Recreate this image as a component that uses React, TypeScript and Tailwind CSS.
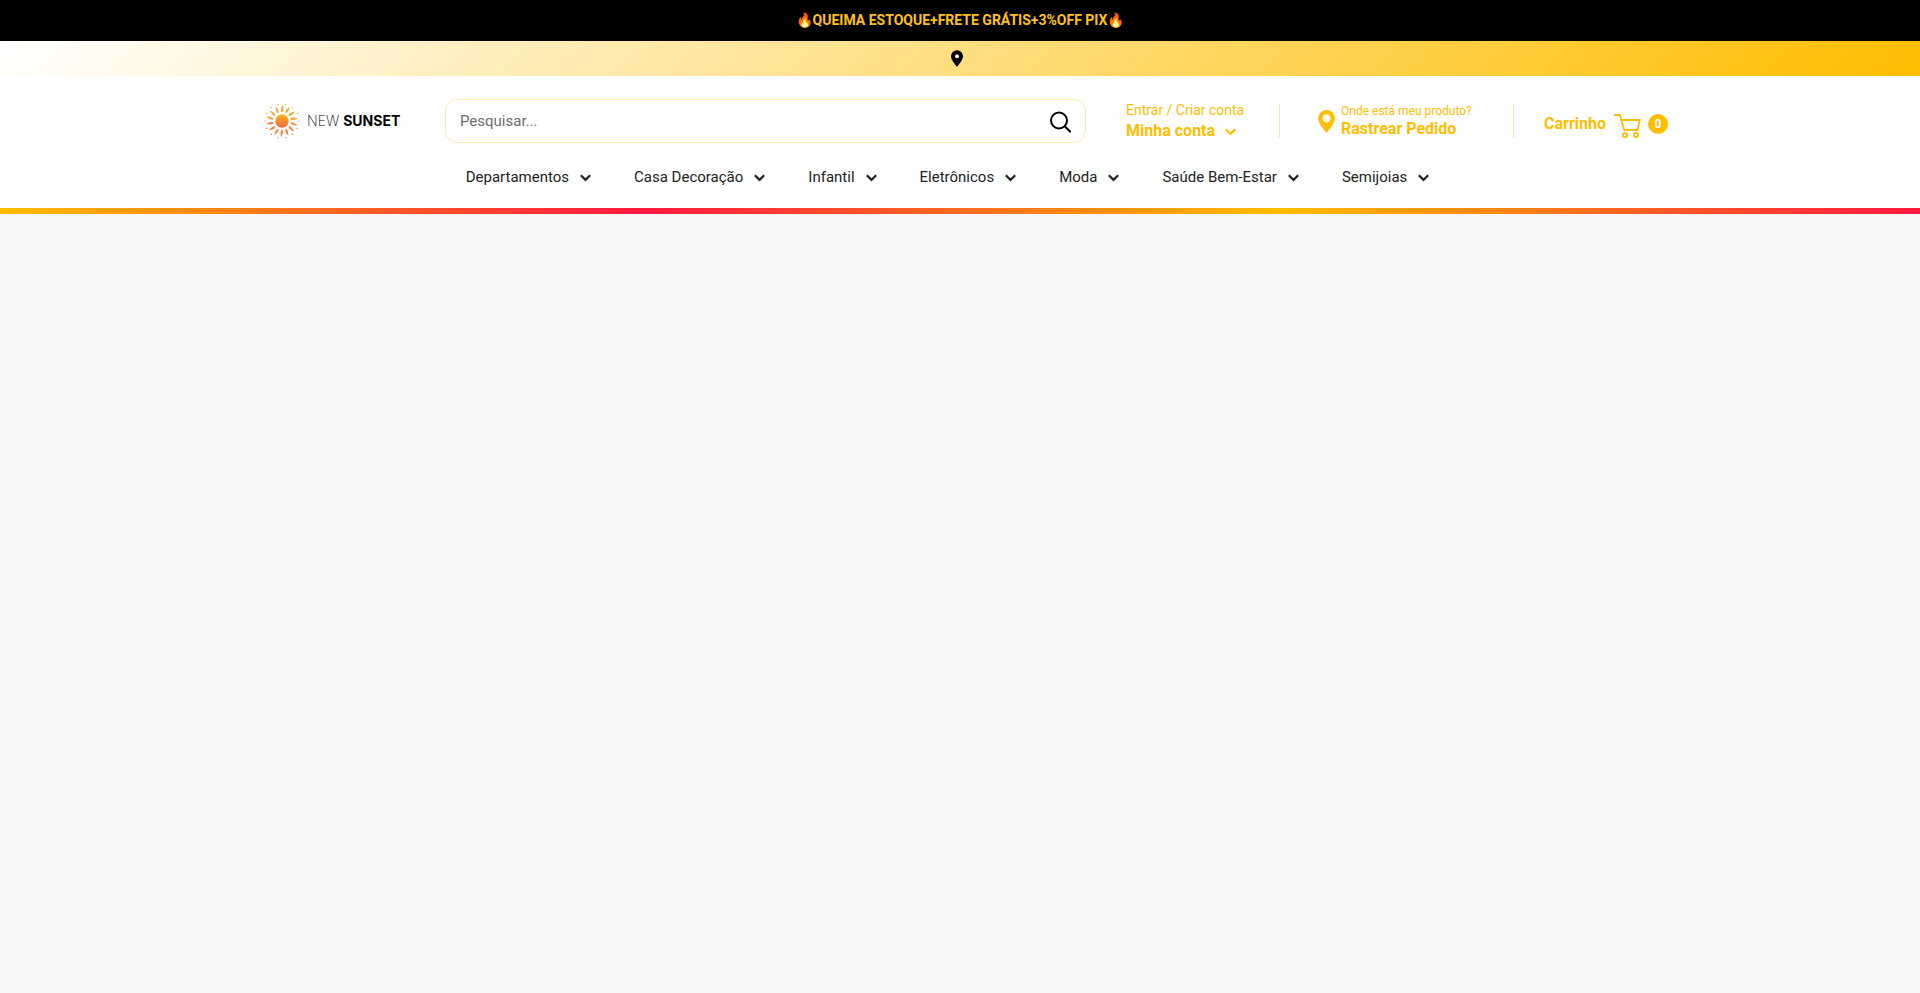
import React from "react";

const menu = ["Departamentos", "Casa Decoração", "Infantil", "Eletrônicos", "Moda", "Saúde Bem-Estar", "Semijoias"];

function Chevron() {
  return (
    <svg viewBox="0 0 11 8" className="mt-0.5 h-2 w-[11px]" fill="none" stroke="currentColor" strokeWidth="2.2" aria-hidden="true">
      <path d="M.8 1.200 5.500 5.900 10.200 1.200" />
    </svg>
  );
}

function Pin({ className, hole }: { className: string; hole: number }) {
  return (
    <svg viewBox="0 0 16 22" className={className} aria-hidden="true">
      <path fill="currentColor" d="M8 0a8 8 0 0 0-8 8c0 5.600 8 14 8 14s8-8.400 8-14a8 8 0 0 0-8-8Z" />
      <circle cx="8" cy="8" r={hole} className="fill-[#fffbe8]" />
    </svg>
  );
}

function Sun() {
  const rays = Array.from({ length: 14 }, (_, i) => (i * 360) / 14);
  return (
    <svg viewBox="-18 -18 36 36" className="h-9 w-9 shrink-0" aria-hidden="true">
      <defs>
        <linearGradient id="core" x1="0" y1="0" x2="0" y2="1">
          <stop offset="0" stopColor="#fdb31c" />
          <stop offset="1" stopColor="#ee6840" />
        </linearGradient>
      </defs>
      <circle r="6.700" fill="url(#core)" />
      {rays.map((a) => (
        <g key={a} transform={`rotate(${a})`} fill={a > 90 && a < 270 ? "#f28a4a" : "#f9a640"}>
          <path d="M-.5-8.800C-1.900-11-.2-13 .5-16.200 1.900-13.500 1.700-10.800.6-8.800Z" />
          <circle cx="-3.700" cy="-16.600" r=".7" />
        </g>
      ))}
    </svg>
  );
}

export default function App() {
  return (
    <div className="min-h-screen bg-[#f7f7f7] font-['Roboto',sans-serif] text-[#222]">
      <div className="flex h-[41px] items-center justify-center bg-black pb-0.5 text-sm font-bold text-[#ffc021]">
        <p>🔥QUEIMA ESTOQUE+FRETE GRÁTIS+3%OFF PIX🔥</p>
      </div>
      <div className="flex h-[35px] items-center justify-center bg-[linear-gradient(135deg,#fff,#ffbd00)] pr-1.5">
        <Pin className="h-[17px] w-3 text-black" hole={2.6} />
      </div>

      <header className="bg-white">
        <div className="mx-auto w-full max-w-[1400px] pt-[23px]">
          <div className="flex h-11 items-center">
            <a href="#" className="flex w-[185px] shrink-0 items-center gap-[7px] pl-1 text-black">
              <Sun />
              <span className="font-['Inter',sans-serif] text-sm whitespace-nowrap">
                <span className="font-extralight">NEW</span> <span className="font-bold">SUNSET</span>
              </span>
            </a>

            <form className="flex h-full min-w-0 flex-1 items-center rounded-xl border border-[#ffe9ad]">
              <input aria-label="Pesquisar" placeholder="Pesquisar..." className="h-full min-w-0 flex-1 px-3.5 text-[15px] outline-none placeholder:text-[#6c6c6c]" />
              <button aria-label="Buscar" className="mt-0.5 mr-3.5 text-black">
                <svg viewBox="0 0 22 22" className="h-[22px] w-[22px]" fill="none" stroke="currentColor" strokeWidth="2" aria-hidden="true">
                  <circle cx="10" cy="9.500" r="8" />
                  <path d="m15.700 15.200 6 6" />
                </svg>
              </button>
            </form>

            <div className="flex shrink-0 items-center text-[#ffbd00]">
              <a href="#" className="ml-10 block w-[153px] text-sm">
                <span className="block">Entrar / Criar conta</span>
                <span className="flex items-center gap-2.5 text-base leading-[22px] font-bold">Minha conta <Chevron /></span>
              </a>
              <a href="#" className="flex h-[34px] w-[235px] items-center gap-1.5 border-x border-[#ffe4a0] pl-[38px] whitespace-nowrap">
                <Pin className="h-[23px] w-[17px]" hole={4} />
                <span>
                  <span className="block text-xs">Onde está meu produto?</span>
                  <span className="block text-base leading-5 font-bold">Rastrear Pedido</span>
                </span>
              </a>
              <a href="#" className="-mr-2 flex items-center pt-1.5 pl-[30px] text-base font-bold">
                Carrinho
                <svg viewBox="0 0 27 24" className="mt-1 ml-2 h-6 w-[27px]" fill="none" stroke="currentColor" strokeWidth="1.8" aria-hidden="true">
                  <path d="M0 1h5.700l4.600 15h13.200l2.200-10H7.200" />
                  <circle cx="11" cy="21" r="2.100" />
                  <circle cx="22" cy="21" r="2.100" />
                </svg>
                <span className="ml-[7px] flex h-5 w-5 items-center justify-center rounded-full bg-[#ffbd00] text-xs text-white">0</span>
              </a>
            </div>
          </div>

          <nav className="mt-[22px] flex h-[43px] justify-center gap-[43px] pr-[25px] text-[15px]">
            {menu.map((item) => (
              <button key={item} className="flex h-6 items-center gap-[11px]">
                {item}
                <Chevron />
              </button>
            ))}
          </nav>
        </div>
        <div className="h-1.5 bg-[linear-gradient(90deg,#ffbd00,#ff1840_33.33%,#ffbd00_66.66%,#ff1840)]" />
      </header>
      <main />
    </div>
  );
}
